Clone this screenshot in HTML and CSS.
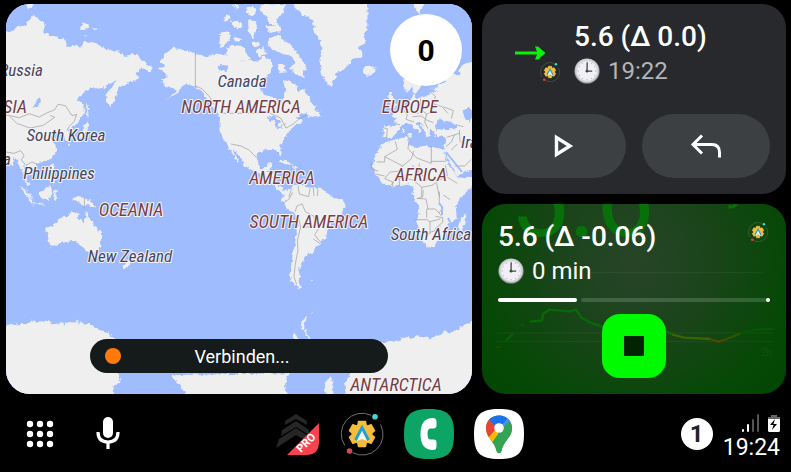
FILE: index.html
```html
<!DOCTYPE html>
<html lang="de">
<head>
<meta charset="utf-8">
<meta name="viewport" content="width=device-width, initial-scale=1">
<title>Dashboard</title>
<link rel="stylesheet" href="styles.css">
</head>
<body>
<svg class="defs" aria-hidden="true">
  <symbol id="clock" viewBox="0 0 26 26">
    <circle cx="13" cy="13" r="12.6" fill="#9b9aa0"/>
    <circle cx="13" cy="12.6" r="11.8" fill="#d4d3da"/>
    <circle cx="13" cy="13" r="10" fill="#f1f0f5"/>
    <g stroke="#b3b2ba" stroke-width="1"><path d="M13 3.6v1.4M13 21v1.4M3.6 13H5M21 13h1.4M17.7 4.9l-.6 1M21.1 8.3l-1 .6M8.3 4.9l.6 1M4.9 8.3l1 .6M4.9 17.7l1-.6M8.3 21.1l.6-1M17.7 21.1l-.6-1M21.1 17.7l-1-.6"/></g>
    <path d="M13.2 4.5l-.2 8.7h5.2" fill="none" stroke="#45444a" stroke-width="1.3"/>
    <circle cx="13" cy="13.2" r="1.4" fill="#45444a"/>
  </symbol>
  <symbol id="gear" viewBox="0 0 44 44">
    <path d="M4.8 33.5A20.7 20.7 0 0 1 31 3.3M40.5 12.5A20.7 20.7 0 0 1 12.500 40.600" fill="none" stroke="#6d7070" stroke-width="1"/>
    <g fill="#f6bd3c">
      <circle cx="22" cy="22" r="10.500"/>
      <path id="tooth" d="M18.500 9.500h7l1 6h-9z M18.500 34.500h7l1-6h-9z" stroke="#f6bd3c" stroke-width="1.500" stroke-linejoin="round"/>
      <use href="#tooth" transform="rotate(60 22 22)"/>
      <use href="#tooth" transform="rotate(120 22 22)"/>
    </g>
    <path d="M22 18l6 10-6-3-6 3z" fill="#e9eef2"/>
    <path d="M15.500 28L22 15.500 28.500 28" fill="none" stroke="#1aa0dc" stroke-width="2.800"/>
    <path d="M22 21l5 8-5-2-5 2z" fill="#f5f7f8"/>
    <circle cx="35" cy="4.800" r="2.800" fill="#3fd9d0"/>
    <circle cx="9.500" cy="39" r="2.800" fill="#d94848"/>
  </symbol>
</svg>

<main class="dashboard">
  <section class="map" aria-label="Karte">
    <svg class="world" viewBox="6 4 466 390" preserveAspectRatio="xMidYMid slice">
      <defs>
        <filter id="coast" x="0" y="0" width="1" height="1" filterUnits="objectBoundingBox">
          <feTurbulence type="fractalNoise" baseFrequency="0.250" numOctaves="2" seed="4"/>
          <feDisplacementMap in="SourceGraphic" scale="5" xChannelSelector="R" yChannelSelector="G"/>
        </filter>
      </defs>
      <rect x="-200" y="-200" width="900" height="900" fill="#9fbcff"/>
      <g filter="url(#coast)"><g transform="scale(.33333)">
        <rect x="0" y="0" width="1440" height="1200" fill="#9fbcff"/>
        <g fill="#efefef">
          <!-- Asia -->
          <path d="M0 100L35 92 55 80 78 75 90 55 100 42 112 60 130 62 138 78 130 95 150 108 175 115 195 118 203 142 225 135 243 145 252 122 290 130 325 150 360 155 372 168 400 162 425 175 440 195 460 203 450 217 435 205 422 207 410 220 415 237 395 245 375 255 355 262 350 282 345 300 330 322 318 300 320 280 335 265 350 240 325 255 305 265 270 265 250 280 230 300 250 315 252 340 235 365 220 380 202 388 212 405 208 420 195 420 188 398 165 402 150 412 165 430 170 455 150 480 125 487 108 492 112 510 95 522 80 508 72 498 76 530 90 560 82 556 66 510 55 490 45 470 35 500 18 470 0 460z"/>
          <path d="M238 78l12-10 18 6-4 14-20 2zM276 84l14 2-6 5zM78 18l20-8 2 12-14 6zM416 142l12-2-6 5zM252 108l10 2-6 4zM258 312l5 4 3 38-4-2zM252 380l10-14 10 6-4 10-16 4zM260 385l-6 24-22 14-8-2 20-16 8-20zM206 426l8 10-6 4zM152 498l8-8 4 8-8 16zM150 520l10 8 4 26-14-18zM118 576l14-6 18-14 6 12-4 22-26 6zM60 558l14 8 28 32-8 0-26-26zM160 574l12-6-6 12 6 14-8 4z"/>
          <!-- Islands and Australia -->
          <g transform="translate(0 585)">
            <path d="M138 100L165 85 185 65 203 66 215 48 235 55 233 72 252 82 260 45 270 75 285 90 303 115 303 145 290 175 265 172 240 148 215 138 180 145 150 155 145 130zM218 12l12-6 20 2 26 12 12 18-24-8-12 4-16-14zM78-4l10 12 14 22-12-8zM98 20l34 6 2 4-32-5zM118 0l12-6 20 0-4 24-14-6zM160-2l10 4-4 20-6-8zM270 182l14 0-4 12zM364 216l22-20 10 2-18 24zM392 160l12 14 10 4-18 18-6-2 6-18z"/>
            <path d="M0 390L80 387 92 372 105 384 137 375 155 388 228 382 230 373 235 385 270 387 290 402 320 410 345 432 355 545 362 560 340 575 335 630H0z"/>
            <path d="M515 540l15 25 20 15 15 50h300l-10-60 10-35z"/>
          </g>
          <g transform="translate(690 0)">
            <!-- North America -->
            <path d="M-210 180L-192 160-168 143-130 152-104 160-70 172-40 160 0 170 20 165 30 185 60 182 85 185 100 170 118 176 130 190 122 215 98 240 88 262 105 285 138 295 150 318 158 300 166 276 162 240 195 250 205 275 222 265 240 300 257 320 250 335 215 343 200 350 212 356 218 370 200 372 180 390 165 415 150 437 157 470 150 468 140 447 110 447 85 458 80 485 90 505 108 504 112 490 127 490 120 515 142 522 140 550 160 570 180 575 160 582 130 556 108 528 75 515 45 498 25 462 8 448 28 490 20 485 0 445-20 418-32 390-30 350-45 332-65 300-82 275-103 260-120 256-140 252-155 278-195 300-160 275-170 264-188 262-205 245-200 235-186 232-192 218-214 210-216 203-195 202z"/>
            <path d="M228 340l24-8 12 0 10 14-16 6-22-4z"/>
            <!-- Arctic islands -->
            <path d="M120 110l35-4 4 14 30 18 14 25 22 26 6 18-14 6 4 22-22-12-20-20 16-12-12-24-26-6-36-16-6-20zM-10 145l16-10 34 4 8 20 14 20-30 6-30-10-14-12zM-30 100l20-6 14 10-18 32-18 6zM90 15l75-4-4 28-22 18 4 18-24-4-10-20-14-14zM50 20l22 2 8 18-18 10-14-12zM0 64l26-2 12 18-16 8zM54 60l24 4 2 22-10 30-14-20zM-20 56l16-16 6 14-16 14zM78 150l22-10 10 20-24 10zM14 110l22 4-6 12-18-2zM106 76l44-2 4 20-40 4zM10 14l20 0-6 16zM140 196l20-2 8 20-18 2zM66 126l20-4 4 14-18 6z"/>
            <path d="M190 15L200 30 216 36 215 48 240 50 255 80 250 95 266 110 276 150 268 180 275 220 290 250 306 257 320 220 350 200 365 180 397 168 396 150 385 140 406 130 403 100 412 80 413 0H190z"/>
            <path d="M396 206l16-6 24 0 0 18-20 10-16-8zM150 482l22 2 18 12-6 2-34-12zM190 498l16 4-14 4z"/>
            <!-- Europe -->
            <path d="M550 0h40l-12 22-12 18-14-20z"/>
            <path d="M740 175L700 195 685 212 690 228 668 220 655 232 636 230 650 242 620 262 602 264 622 275 600 276 588 290 560 294 550 284 543 292 538 312 520 325 500 335 484 347 496 357 497 378 462 376 460 412 472 416 486 413 500 398 510 382 525 372 538 368 555 386 570 400 577 394 556 368 566 366 580 384 590 412 600 406 596 392 614 394 612 406 650 412 648 425 640 450 660 490 680 525 692 524 740 500z"/>
            <path d="M520 235l4 35 8 8 14-18 10 26 16-22 8-30zM476 276l10 0 0 16 12 20 0 10-22 6 6-18-8-12zM462 302l8 0 0 14-10 4zM536 398l10 2-2 10-10 0zM520 384l6 2-2 12-6 0z"/>
            <!-- Africa -->
            <path d="M470 425l20-6 40-8 6 20 24 14 16-7 16 0 48 10 6 26 18 34 22 25 48-4-10 34-34 30-12 26 2 36-28 22-10 30-32 32-20 4-12-26-16-44 6-50-20-38 2-24-18-10-42 8-26-4-24-26-12-26 6-36 20-32z"/>
            <path d="M710 640l-4 30-12 24-10-8 6-30z"/>
          </g>
          <!-- South America and Antarctica -->
          <g transform="translate(690 585)">
            <path d="M175-15L165-5 155 12 170 38 195 57 202 90 196 140 187 190 180 230 182 255 200 275 217 282 205 262 212 235 202 228 222 195 230 180 252 172 256 156 272 150 290 115 300 85 325 68 347 32 343 18 315 8 287-8 275-22 240-22 200-30 184-22zM238 256l12 0-8 3z"/>
            <path d="M236 438L222 405 212 402 214 380 232 362 226 380 222 398 242 438zM192 412l14 20 0 10-14-4zM244 354l8-4-6 8z"/>
            <path d="M450 450L470 436 500 440 530 426 545 432 560 424 600 430 630 420 642 408 660 418 700 390 740 376V630H355L345 560 365 535zM285 630l3-70 12-17 10 17v70z"/>
          </g>
        </g>
        <g fill="#9fbcff">
          <path d="M98 322l18-26 8-4-8 20-16 12zM652 202l20-10 16 6-10 14-20 2z"/>
          <g transform="translate(690 0)">
            <path d="M614 376l14-18 14 10 18-6 22 22-36 6-28-4zM698 330l20-8 12 16-10 30-16-16zM112 348l26 4 12 14-12 20-6-24-12 4zM140 382l30-10-6 6-22 10zM588 282l10-14 20-8-8 14z"/>
          </g>
        </g>
      </g></g>
      <g transform="scale(.33333)" fill="none" stroke="#9a9a9a" stroke-width="2" stroke-linejoin="round">
        <path d="M586 160v98l20 8 24 26 12 22M660 340h150l32 14 16 30 22-12 16-14 22-12M693 432l30 6 24 12 24 24M18 345l40 8 30-12 30 10 22-12 24-10 10-16 22 4 20 30 14-4-8 22-14 14-8 14M30 350l20 20 40 14 40-8 34-24-14-6M18 456l24 4 20-8 10 14-8 14 14 16 18-10 14 6M253 592v34"/>
        <g transform="translate(690 0)">
          <path d="M440 486h24l0-16 38-22-6-24M464 470l54 28 26-22 8-24M536 430l-2 16 26 28 44 16v-52M604 484h44M518 498l-14 16-24 2-16 20 24 10 30-14 36 10 12-30-20-16M568 490l-2 26 24 22 36 4 26-16-6-30M552 542l24 20 30-6 18-12M488 546v14M508 534v24M424 488v16l20 10M500 536l-18 20M464 528l-28-6M652 532l30 18M575 562v30M620 550l8 40"/>
          <path d="M462 384l10 2-2 26M496 372l14 2M520 330l12 14-4 14 24 8M540 312l4 24 24 4M572 296l0 32 18 14 20-6M600 276l16 12-4 24 24 8 18 20M548 350l26-2 16 12 20 8M590 342l-6 24 10 20M568 368l12 8M620 392l0-6M688 390l2 34M650 412l38-12M648 440l16-14 10-22M664 450l18-18M690 425l22 10M674 498l30 0 20-20M640 320l30 12-6 24M700 380l-22-6"/>
          <path d="M110 515l12-2M124 536l10-10M184 568l-8 24M204 558l4 24 28 8 4-24M250 564l2 24M264 568l-2 20"/>
        </g>
        <g transform="translate(690 585)">
          <path d="M160 24l18-12 10-20M196 50l4-16 16-8 10 24 26 14 4 24 10 12-12 20 18 22M204 62l8 34-10 40 2 30-8 40-4 40 8 22M222 96l28 0M250 132l20 14M240 82l-20 14"/>
          <path d="M555 74h36l8 6 32-8M600 80v36h-26M614 102l24-20 0-14-22-4M590 68v-26h26l20 22M560 10l28 2 6 30M628-10v40M640 0l20 14M600 112l18-6 14-12M580-15l-2 20-16 6M640 38l-14 16"/>
        </g>
      </g>
      <path d="M439 203l3 4 0 8M450 222l-2-4M446 152l16 20" fill="none" stroke="#9fbcff" stroke-width="2"/>
      <g class="place">
        <text x="43" y="76" text-anchor="end">Russia</text>
        <text x="242" y="87">Canada</text>
        <text x="66" y="141">South Korea</text>
        <text x="11" y="165" text-anchor="end">a</text>
        <text x="59" y="179">Philippines</text>
        <text x="130" y="262">New Zealand</text>
        <text x="431" y="240">South Africa</text>
        <text x="461" y="148" text-anchor="start">Iran</text>
      </g>
      <g class="place continent">
        <text x="27" y="113" text-anchor="end">ASIA</text>
        <text x="241" y="113">NORTH AMERICA</text>
        <text x="410" y="113">EUROPE</text>
        <text x="282" y="184">AMERICA</text>
        <text x="421" y="181">AFRICA</text>
        <text x="309" y="228">SOUTH AMERICA</text>
        <text x="131" y="216">OCEANIA</text>
        <text x="396" y="391">ANTARCTICA</text>
      </g>
    </svg>
    <div class="speed">0</div>
    <div class="toast" role="status"><span class="dot"></span><span class="toast-text">Verbinden...</span></div>
  </section>

  <div class="side">
    <section class="card message">
      <div class="message-head">
        <div class="trend">
          <svg class="arrow" viewBox="0 0 30 14" aria-hidden="true"><path d="M0 7h26" fill="none" stroke="#0df00d" stroke-width="3"/><path d="M20 0.500l3 0 7.500 6.500-7.500 6.500-3 0 2-5V5.500z" fill="#0df00d"/></svg>
          <svg class="badge"><use href="#gear"/></svg>
        </div>
        <div>
          <h2 class="title">5.6 (Δ 0.0)</h2>
          <p class="meta muted"><svg class="clock"><use href="#clock"/></svg>19:22</p>
        </div>
      </div>
      <div class="actions">
        <button class="pill" type="button" aria-label="Abspielen"><svg class="glyph" viewBox="0 0 32 32"><path d="M10.500 7.500v17L24 16z" fill="none" stroke="#fff" stroke-width="3.400"/></svg></button>
        <button class="pill" type="button" aria-label="Antworten"><svg class="glyph" viewBox="0 0 32 32"><path d="M12 5.500L3 14.500l9 9M3 14.500h19q7.500 0 7.500 8v5" fill="none" stroke="#fff" stroke-width="3"/></svg></button>
      </div>
    </section>

    <section class="card media">
      <svg class="cover" viewBox="0 0 304 190" preserveAspectRatio="xMidYMid slice" aria-hidden="true">
        <g transform="translate(-2 -9) scale(.33333)" fill="none">
          <path d="M330 233h520M50 414h830M50 439h830" stroke="#fff" stroke-opacity=".06" stroke-width="3"/>
          <path d="M45 457l20-2" stroke="#3a4206" stroke-width="6" stroke-opacity=".5"/>
          <path d="M78 437l22-22M125 392l5-2" stroke="#0a5c0a" stroke-width="7"/>
          <path d="M150 380l36-4 4-20 18-12 30 2 30 4 20-6 16 24 30 16 30 10 40 14" stroke="#066a06" stroke-width="7"/>
          <path d="M550 405l26 12" stroke="#087008" stroke-width="7"/>
          <path d="M576 418l36 10 80 4" stroke="#3f6200" stroke-width="7"/>
          <path d="M690 432l26 8 24-8" stroke="#504506" stroke-width="7"/>
          <path d="M740 432l40-16" stroke="#305400" stroke-width="7"/>
          <path d="M780 414l50-10 54-3" stroke="#075407" stroke-width="7"/>
          <path d="M745 36l16-2 10-8" stroke="#087008" stroke-width="10"/>
        </g>
        <text class="ghost" x="28" y="32">5.6</text>
        <text class="ghost-small" x="279" y="152">2h</text>
      </svg>
      <div class="media-head">
        <h2 class="title">5.6 (Δ -0.06)</h2>
        <svg class="badge"><use href="#gear"/></svg>
      </div>
      <p class="meta"><svg class="clock"><use href="#clock"/></svg>0 min</p>
      <div class="progress" role="progressbar" aria-label="Fortschritt" aria-valuenow="29"><span class="played"></span><span class="rest"></span></div>
      <button class="stop" type="button" aria-label="Stopp"><span class="square"></span></button>
    </section>
  </div>
</main>

<nav class="taskbar">
  <div class="tools">
    <button class="icon" type="button" aria-label="Apps"><svg viewBox="0 0 40 40" fill="#fff"><g id="dots"><circle cx="10" cy="10" r="3.200"/><circle cx="20" cy="10" r="3.200"/><circle cx="30" cy="10" r="3.200"/></g><use href="#dots" y="10"/><use href="#dots" y="20"/></svg></button>
    <button class="icon" type="button" aria-label="Mikrofon"><svg viewBox="0 0 40 40"><rect x="15" y="3" width="10" height="21" rx="5" fill="#fff"/><path d="M10 18q0 10 10 10t10-10M20 28v7" fill="none" stroke="#fff" stroke-width="3.200"/></svg></button>
  </div>
  <div class="apps">
    <button class="app small" type="button" aria-label="Pro">
      <svg viewBox="0 0 44 44"><g fill="#262626"><path d="M9 9l11-7 11 7v4L20 7 9 13zM6 18l14-9 13 9v5l-13-8-15 9zM3 27l17-11 15 10 2 7-17-10L0 36z"/></g><path d="M43 11v19q0 13-13 13H11z" fill="#f5444d"/><text class="pro" transform="translate(25 41) rotate(-45)">PRO</text></svg>
    </button>
    <button class="app small" type="button" aria-label="Einstellungen"><svg><use href="#gear"/></svg></button>
    <button class="app" type="button" aria-label="Telefon">
      <svg viewBox="0 0 50 50"><path d="M25 0C44 0 50 6 50 25S44 50 25 50 0 44 0 25 6 0 25 0z" fill="#0ca566"/><path d="M29 9q3.500 0 3.500 3.500v4q0 3-3 3h-3q-3 0-3 5.500t3 5.500h3q3 0 3 3v4q0 3.500-3.500 3.500-12.500 0-12.500-16t12.500-16z" fill="#fff"/></svg>
    </button>
    <button class="app" type="button" aria-label="Karten">
      <svg viewBox="0 0 50 50"><defs><clipPath id="pin"><path d="M25 6.500c8 0 13 6 13 12.500 0 10-9 13.500-10.500 23-.5 3-4.500 3-5 0C21 32.500 12 29 12 19c0-6.500 5-12.500 13-12.500z"/></clipPath></defs><path d="M25 0C44 0 50 6 50 25S44 50 25 50 0 44 0 25 6 0 25 0z" fill="#fff"/><g clip-path="url(#pin)"><path d="M10 5h30v40H10z" fill="#34a353"/><path d="M10 34V24L25 8l8 4-15 23z" fill="#fbbc04"/><path d="M8 14l8-5 8 9-13 14z" fill="#ea4335"/><path d="M14 9L26 0l12 11-13 15-4-9z" fill="#1a73e8"/><path d="M25 19L35 8l6 4v8z" fill="#4f90f5"/><path d="M35 12l5 8-14 25-10-9 12-16z" fill="#34a353"/></g><circle cx="25" cy="19" r="4.800" fill="#fff"/></svg>
    </button>
  </div>
  <div class="state">
    <span class="count">1</span>
    <div class="clockbox">
      <svg class="signals" viewBox="0 0 40 20" aria-hidden="true"><g stroke-width="2" stroke-linecap="round"><path d="M3 17v-1M8 17v-6" stroke="#fff"/><path d="M13 17V6M18 17V1" stroke="#555"/></g><path d="M31 1h6v3h-6z" fill="#666"/><rect x="28" y="3" width="12" height="15" rx="1.500" fill="#fff"/><path d="M28 4.500Q28 3 29.500 3h9Q40 3 40 4.500V5H28z" fill="#666"/><path d="M35 5l-5 6h3.500L32 16l5-6h-3.500z" fill="#000"/></svg>
      <time>19:24</time>
    </div>
  </div>
</nav>
</body>
</html>
```
FILE: styles.css
```css
* {
  box-sizing: border-box;
}

body {
  margin: 0;
  min-height: 100vh;
  display: grid;
  grid-template-rows: 1fr auto;
  background: #000;
  color: #fff;
  font-family: Roboto, "Liberation Sans", sans-serif;
}

h2,
p {
  margin: 0;
}

button {
  padding: 0;
  border: 0;
  background: none;
  color: inherit;
  font: inherit;
}

svg {
  display: block;
}

.defs {
  position: absolute;
  width: 0;
  height: 0;
}

.dashboard {
  display: grid;
  grid-template-columns: 466fr 304fr;
  gap: 10px;
  padding: 4px 5px 0 6px;
}

/* Map */
.map {
  position: relative;
  overflow: hidden;
  border-radius: 24px;
  background: #9fbcff;
}

.world {
  position: absolute;
  inset: 0;
  width: 100%;
  height: 100%;
}

.place {
  font-family: "Roboto Condensed", Roboto, sans-serif;
  font-size: 17px;
  font-style: italic;
  text-anchor: middle;
  fill: #45465c;
  stroke: #f4f4fa;
  stroke-width: 2px;
  stroke-linejoin: round;
  paint-order: stroke;
}

.continent {
  font-size: 18px;
  fill: #743f45;
}

.speed {
  position: absolute;
  top: 10px;
  right: 10px;
  width: 72px;
  height: 72px;
  border-radius: 50%;
  background: #fff;
  color: #000;
  font-size: 30px;
  font-weight: 700;
  line-height: 74px;
  text-align: center;
}

.toast {
  position: absolute;
  left: 18%;
  right: 18%;
  bottom: 21px;
  display: flex;
  align-items: center;
  height: 34px;
  padding: 0 25px 0 15px;
  border-radius: 17px;
  background: #151a1a;
  font-size: 18px;
}

.dot {
  width: 16px;
  height: 16px;
  border-radius: 50%;
  background: #ff7a0a;
}

.toast-text {
  flex: 1;
  text-align: center;
}

/* Cards */
.side {
  display: grid;
  grid-template-rows: 1fr 1fr;
  gap: 10px;
}

.card {
  display: flex;
  flex-direction: column;
  padding: 16px;
  border-radius: 24px;
  overflow: hidden;
}

.message {
  justify-content: space-between;
  background: #28292d;
}

.message-head {
  display: flex;
  gap: 14px;
}

.trend {
  display: flex;
  flex-direction: column;
  align-items: flex-end;
  width: 62px;
  padding-top: 26px;
}

.arrow {
  width: 30px;
  height: 14px;
  margin-right: 15px;
}

.badge {
  width: 20px;
  height: 20px;
}

.trend .badge {
  margin-top: 2px;
}

.title {
  font-size: 28px;
  font-weight: 500;
  line-height: 34px;
}

.meta {
  display: flex;
  align-items: center;
  gap: 8px;
  font-size: 24px;
  line-height: 34px;
}

.muted {
  color: #b4b5b9;
}

.clock {
  width: 26px;
  height: 26px;
}

.actions {
  display: grid;
  grid-template-columns: 1fr 1fr;
  gap: 16px;
}

.pill {
  display: grid;
  place-items: center;
  height: 64px;
  border-radius: 32px;
  background: #3c4043;
}

.glyph {
  width: 32px;
  height: 32px;
}

.media {
  position: relative;
  background: radial-gradient(circle at 50% 30%, #284428 0%, #1c441c 35%, #064806 75%, #034603 100%);
}

.media > * {
  position: relative;
}

.media > .cover {
  position: absolute;
  inset: 0;
  width: 100%;
  height: 100%;
}

.ghost {
  font-size: 104px;
  fill: #087008;
}

.ghost-small {
  font-size: 10px;
  fill: #145214;
}

.media-head {
  display: flex;
  justify-content: space-between;
}

.media-head .badge {
  margin: 2px 2px 0 0;
}

.progress {
  display: flex;
  gap: 4px;
  margin-top: 10px;
}

.played,
.rest {
  height: 4px;
  border-radius: 2px;
}

.played {
  width: 29%;
  background: #fff;
}

.rest {
  display: flex;
  flex: 1;
  justify-content: flex-end;
  background: rgba(255, 255, 255, 0.16);
}

.rest::after {
  content: "";
  width: 4px;
  border-radius: 50%;
  background: #fff;
}

.stop {
  display: grid;
  place-items: center;
  align-self: center;
  width: 64px;
  height: 64px;
  margin-top: 12px;
  border-radius: 18px;
  background: #00fa00;
}

.square {
  width: 20px;
  height: 20px;
  background: #022402;
}

/* Task bar */
.taskbar {
  display: grid;
  grid-template-columns: 1fr auto 1fr;
  align-items: center;
  height: 78px;
  padding: 2px 11px 0 20px;
}

.tools,
.apps,
.state {
  display: flex;
  align-items: center;
}

.tools {
  gap: 28px;
}

.icon {
  width: 40px;
  height: 40px;
}

.apps {
  gap: 20px;
}

.app {
  width: 50px;
  height: 50px;
}

.small {
  width: 44px;
  height: 44px;
}

.app svg {
  width: 100%;
  height: 100%;
}

.pro {
  font-size: 11px;
  font-weight: 700;
  fill: #fff;
}

.state {
  justify-content: flex-end;
  gap: 10px;
}

.count {
  width: 32px;
  height: 32px;
  border-radius: 50%;
  background: #fff;
  color: #222;
  font-size: 24px;
  font-weight: 700;
  line-height: 32px;
  text-align: center;
}

.clockbox {
  display: flex;
  flex-direction: column;
  align-items: flex-end;
  padding-top: 8px;
  font-size: 23px;
  line-height: 28px;
}

.signals {
  width: 40px;
  height: 20px;
}
```
